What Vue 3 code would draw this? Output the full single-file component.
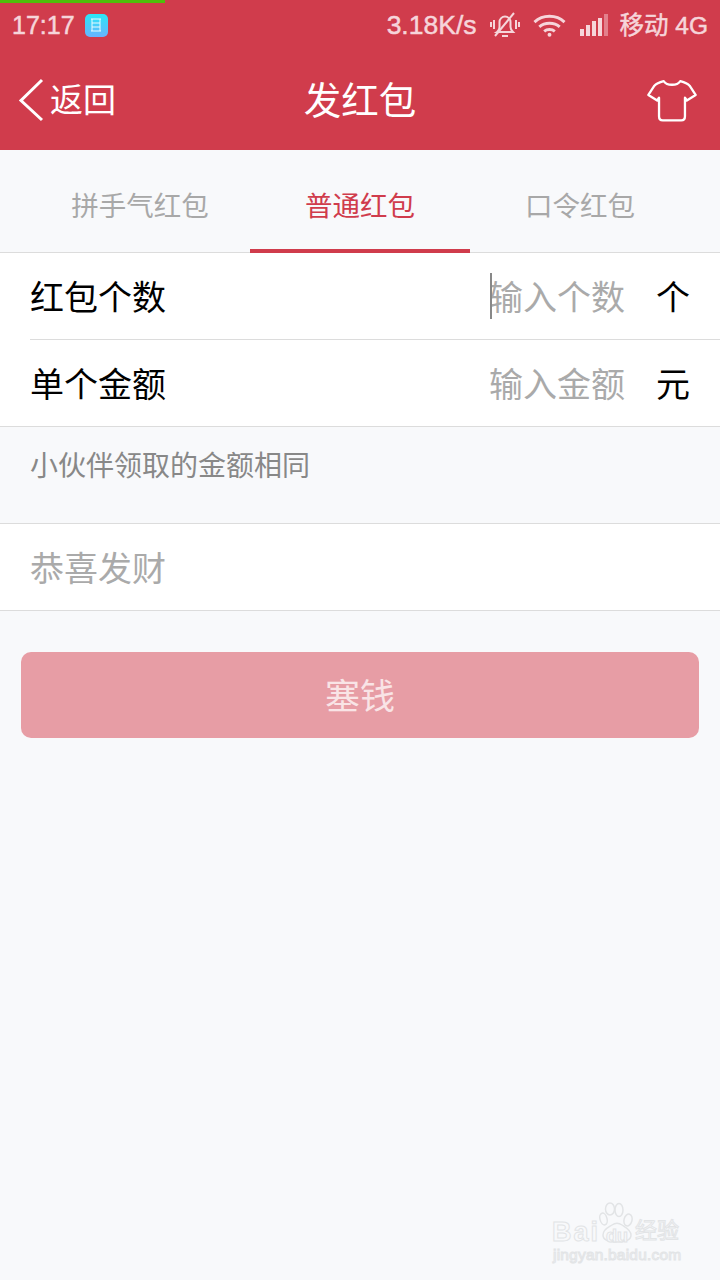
<script setup>
const tabs = [
  { label: '拼手气红包', active: false },
  { label: '普通红包', active: true },
  { label: '口令红包', active: false },
]
</script>

<template>
  <div class="page">
    <div class="progress"></div>
    <header class="top">
      <div class="status">
        <div class="status-left">
          <span class="time">17:17</span>
          <span class="app-icon">
            <svg width="14" height="16" viewBox="0 0 14 16">
              <path d="M2 2h10M3 2v12M11 2v12M2 14h10M3 6h8M3 10h8" stroke="#e8fbff" stroke-width="1" fill="none" />
            </svg>
          </span>
        </div>
        <div class="status-right">
          <span class="speed">3.18K/s</span>
          <svg class="mute" width="30" height="26" viewBox="0 0 30 26" fill="none" stroke="#f6d5da" stroke-width="2">
            <path d="M7 20h16c-2-2-2.500-3-2.500-5V10c0-3-2.500-5.500-5.500-5.500S9.500 7 9.500 10v5C9.500 17 8.500 19 7 20z" />
            <path d="M12 24h6" />
            <path d="M5 24L24 1" />
            <path d="M1 10v5M4 8v9M26 8v9M29 10v5" />
          </svg>
          <svg class="wifi" width="33" height="24" viewBox="0 0 34 24" fill="none" stroke="#f6d5da" stroke-width="3">
            <path d="M1.500 9C10 1 24 1 32.500 9" />
            <path d="M6.500 14C12 9 22 9 27.500 14" />
            <path d="M11.500 18.500C14.500 16 19.500 16 22.500 18.500" />
            <circle cx="17" cy="22" r="2" fill="#f6d5da" stroke="none" />
          </svg>
          <div class="signal">
            <i style="height: 7px"></i>
            <i style="height: 11px"></i>
            <i style="height: 15px"></i>
            <i style="height: 18px"></i>
            <i class="off" style="height: 22px"></i>
          </div>
          <span class="carrier">移动 4G</span>
        </div>
      </div>
      <nav class="nav">
        <div class="back">
          <svg width="26" height="44" viewBox="0 0 26 44" fill="none" stroke="#fff" stroke-width="3">
            <path d="M24 2L3 22.500 24 42" />
          </svg>
          <span class="lift">返回</span>
        </div>
        <div class="title">发红包</div>
        <svg class="shirt" width="50" height="45" viewBox="0 0 54 46" fill="none" stroke="#fff" stroke-width="2.500" stroke-linejoin="round">
          <path d="M18 2c-4 1-8 2.500-10 5L1.500 17 11 23 13 20v20c0 3 1.500 4.500 4 4.500h20c2.500 0 4-1.500 4-4.500V20l2 3 9.500-6L46 7c-2-2.500-6-4-10-5-2 3-5.500 4-9 4s-7-1-9-4z" />
        </svg>
      </nav>
    </header>

    <div class="tabs">
      <div v-for="tab in tabs" :key="tab.label" class="tab" :class="{ active: tab.active }">{{ tab.label }}</div>
    </div>

    <section class="group">
      <div class="row inset">
        <span class="label">红包个数</span>
        <span class="hint with-caret">输入个数</span>
        <span class="unit">个</span>
      </div>
      <div class="row">
        <span class="label">单个金额</span>
        <span class="hint">输入金额</span>
        <span class="unit">元</span>
      </div>
    </section>

    <p class="note">小伙伴领取的金额相同</p>

    <section class="group">
      <div class="row greeting"><span>恭喜发财</span></div>
    </section>

    <div class="btn"><span class="lift">塞钱</span></div>

    <div class="mark">
      <span class="mark-bai">Bai</span>
      <svg class="paw" width="36" height="42" viewBox="0 0 36 42">
        <ellipse cx="4.500" cy="17" rx="3.500" ry="6" transform="rotate(-15 4.500 17)" />
        <ellipse cx="11" cy="7" rx="4.500" ry="6" />
        <ellipse cx="20" cy="8" rx="4" ry="6.500" />
        <ellipse cx="29" cy="18" rx="4" ry="6" transform="rotate(15 29 18)" />
        <path d="M4 33c0-6 6-8 9-10 3-2 7-2 10 0 3 2 9 5 9 10 0 5-5 7-14 7S4 38 4 33z" />
      </svg>
      <span class="mark-du">du</span>
      <span class="mark-cn">经验</span>
      <span class="mark-url">jingyan.baidu.com</span>
    </div>
  </div>
</template>

<style scoped>
.page {
  position: relative;
  width: 720px;
  height: 1280px;
  overflow: hidden;
  background: #f8f9fb;
  font-family: "Noto Sans CJK SC", "Liberation Sans", sans-serif;
}

.progress {
  position: absolute;
  left: 0;
  top: 0;
  width: 165px;
  height: 3px;
  background: #4fbe0a;
}

.top {
  height: 150px;
  background: #d03c4c;
}

.status {
  height: 50px;
  padding: 0 12px;
  display: flex;
  justify-content: space-between;
  align-items: center;
  color: #f6d5da;
  font-family: "Liberation Sans", "Noto Sans CJK SC", sans-serif;
  -webkit-text-stroke: 0.5px #f6d5da;
}

.status-left,
.status-right {
  display: flex;
  align-items: center;
}

.time {
  font-size: 25px;
}

.speed {
  font-size: 26.500px;
}

.app-icon {
  width: 23px;
  height: 23px;
  margin-left: 10px;
  border-radius: 5px;
  background: linear-gradient(#2ae6f6, #69b4ff);
  display: flex;
  align-items: center;
  justify-content: center;
}

.mute {
  margin-left: 13px;
}

.wifi {
  margin-left: 13px;
}

.signal {
  margin-left: 14px;
  display: flex;
  align-items: flex-end;
  gap: 2px;
  height: 22px;
}

.signal i {
  width: 4px;
  background: #f6d5da;
}

.signal i.off {
  background: #e3808c;
}

.carrier {
  margin-left: 12px;
  font-size: 24.500px;
  padding-bottom: 4px;
}

.nav {
  height: 100px;
  padding: 0 23px 0 18px;
  display: flex;
  align-items: center;
  justify-content: space-between;
  position: relative;
  color: #fff;
}

.back {
  display: flex;
  align-items: center;
  gap: 6px;
  font-size: 33px;
}

.lift {
  padding-bottom: 3px;
}

.back .lift {
  padding-bottom: 5px;
}

.title {
  position: absolute;
  left: 0;
  right: 0;
  text-align: center;
  font-size: 37.500px;
  padding-bottom: 5px;
}

.tabs {
  height: 102px;
  padding: 0 30px;
  display: flex;
  border-bottom: 1px solid #dcdcdc;
}

.tab {
  width: 220px;
  padding-top: 5px;
  box-sizing: border-box;
  display: flex;
  align-items: center;
  justify-content: center;
  font-size: 27.500px;
  color: #a8a8a8;
}

.tab.active {
  color: #d03c4c;
  border-bottom: 4px solid #d03c4c;
  margin-bottom: -1px;
  padding-top: 9px;
}

.group {
  background: #fff;
  border-bottom: 1px solid #dcdcdc;
}

.row {
  height: 86px;
  margin-left: 30px;
  padding-right: 30px;
  display: flex;
  align-items: center;
  font-size: 34px;
  color: #000;
}

.row span {
  padding-bottom: 1px;
}

.row.inset {
  border-bottom: 1px solid #dcdcdc;
}

.label {
  flex: 1;
}

.hint {
  position: relative;
  color: #aaa;
  margin-right: 31px;
}

.with-caret::before {
  content: "";
  position: absolute;
  left: 1px;
  top: 50%;
  width: 2px;
  height: 46px;
  margin-top: -23px;
  background: #888;
}

.note {
  margin: 0;
  height: 97px;
  padding: 19px 0 0 30px;
  box-sizing: border-box;
  font-size: 28px;
  line-height: 36px;
  color: #888;
  border-bottom: 1px solid #dcdcdc;
}

.greeting {
  color: #aaa;
}

.btn {
  margin: 41px 21px 0;
  height: 86px;
  border-radius: 10px;
  background: #e79da5;
  color: #f9e4e6;
  font-size: 35px;
  display: flex;
  align-items: center;
  justify-content: center;
}

/* watermark, stamped over the page corner */
.mark {
  position: absolute;
  left: 552px;
  top: 1200px;
  width: 130px;
  height: 66px;
  color: #f8f9fb;
  font-family: "Liberation Sans", "Noto Sans CJK SC", sans-serif;
  -webkit-text-stroke: 1px #e2e4e6;
}

.mark span {
  position: absolute;
  white-space: nowrap;
}

.mark-bai {
  left: 0;
  top: 17px;
  font-size: 27px;
  font-weight: 700;
  line-height: 30px;
  letter-spacing: 2px;
}

.paw {
  position: absolute;
  left: 47px;
  top: 2px;
  fill: none;
  stroke: #e2e4e6;
  stroke-width: 1.500;
}

.mark-du {
  left: 54px;
  top: 26px;
  font-size: 18px;
  font-weight: 700;
  line-height: 20px;
}

.mark-cn {
  left: 83px;
  top: 16px;
  font-size: 22px;
  line-height: 30px;
}

.mark-url {
  left: 1px;
  top: 46px;
  font-size: 15.500px;
  line-height: 18px;
  letter-spacing: 0.200px;
}
</style>

<style>
html,
body {
  margin: 0;
  background: #f8f9fb;
}
</style>
